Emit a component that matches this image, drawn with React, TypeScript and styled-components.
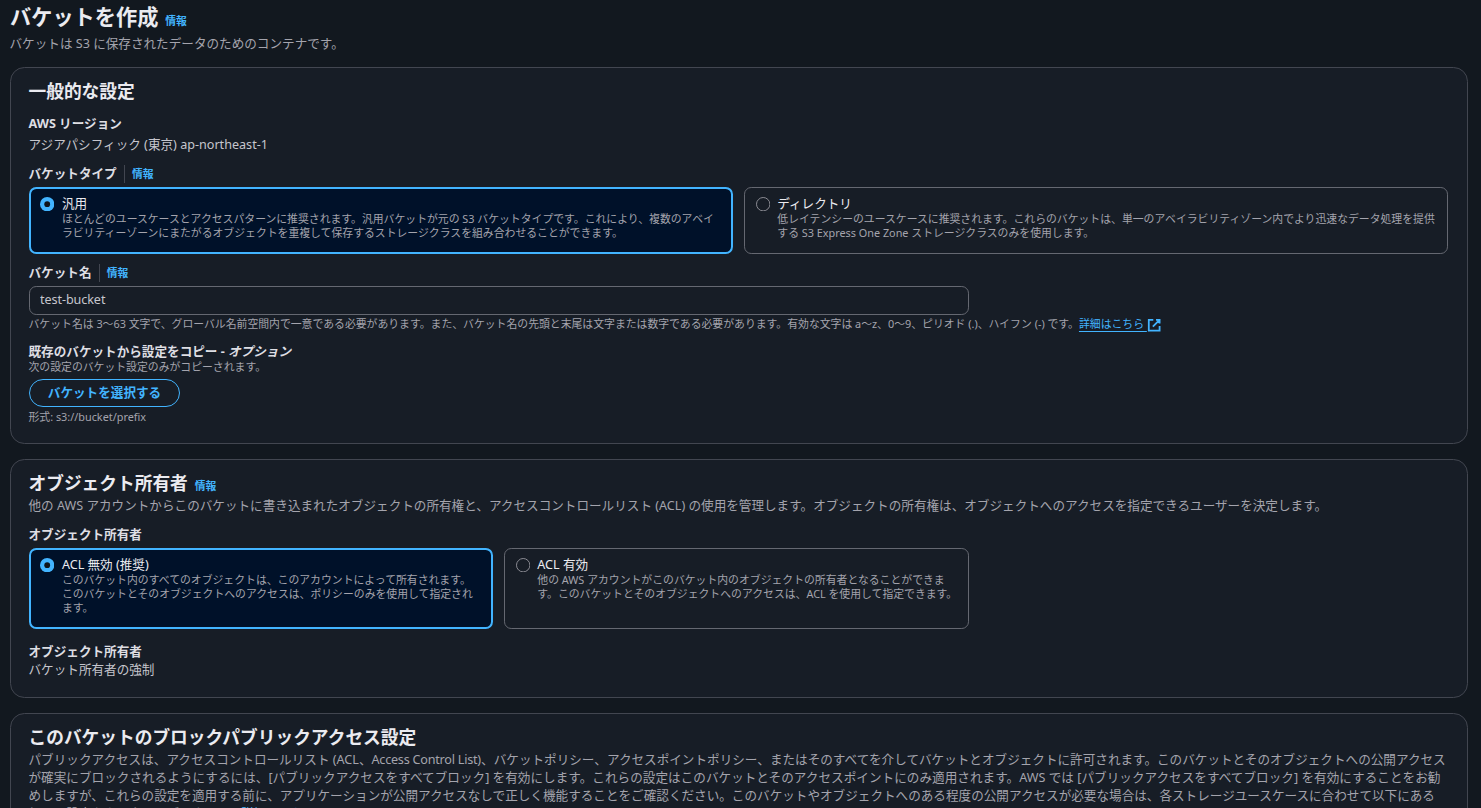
import React from "react";
import styled, { createGlobalStyle } from "styled-components";

const c = {
  page: "#12181f",
  panel: "#171d26",
  panelBorder: "#424650",
  controlBorder: "#656871",
  heading: "#ebebf0",
  label: "#dedee3",
  body: "#c6c6cd",
  secondary: "#a4a4ad",
  accent: "#42b4ff",
  selected: "#001129",
};

const GlobalStyle = createGlobalStyle`
  *, *::before, *::after { box-sizing: border-box; }
  html, body { margin: 0; padding: 0; background: ${c.page}; overflow: hidden; }
  body {
    font-family: "Noto Sans", "Noto Sans CJK JP", sans-serif;
    font-size: 12.6px;
    line-height: 18px;
    color: ${c.body};
  }
  h1, h2, p { margin: 0; }
`;

const Page = styled.main`
  height: 808px;
  overflow: hidden;
  padding: 3px 13px 0 10px;
  display: flex;
  flex-direction: column;
  white-space: nowrap;
`;

const PageHeader = styled.header`
  height: 64px;
  flex: none;
`;

const TitleRow = styled.div`
  display: flex;
  align-items: baseline;
  gap: 7px;
`;

const PageTitle = styled.h1`
  font-size: 21.2px;
  line-height: 27px;
  font-weight: 700;
  color: ${c.heading};
`;

const PanelTitle = styled.h2`
  && {
    margin-left: -0.5px;
  }
  font-size: 17.72px;
  line-height: 22px;
  font-weight: 700;
  color: ${c.heading};
`;

const InfoLink = styled.a`
  font-size: 10.8px;
  line-height: 18px;
  font-weight: 700;
  color: ${c.accent};
`;

const Description = styled.p<{ $top?: number }>`
  && {
    margin: ${(p) => p.$top ?? 0}px 0 0 -0.5px;
  }
  color: ${c.secondary};
`;

const Panel = styled.section<{ $height: number }>`
  flex: none;
  height: ${(p) => p.$height}px;
  margin-bottom: 15px;
  padding: 12px 19px 0 18px;
  background: ${c.panel};
  border: 1px solid ${c.panelBorder};
  border-radius: 14.4px;
`;

const Field = styled.div<{ $top: number }>`
  margin-top: ${(p) => p.$top}px;
`;

const Label = styled.div`
  display: flex;
  height: 18px;
  margin-left: -0.5px;
  font-weight: 700;
  color: ${c.label};
`;

const LabelInfo = styled(InfoLink)`
  margin-left: 7.3px;
  padding-left: 7px;
  border-left: 1px solid ${c.panelBorder};
`;

const Value = styled.div<{ $top?: number }>`
  margin: ${(p) => p.$top ?? 0}px 0 0 -0.5px;
`;

const Small = styled.div<{ $top?: number }>`
  margin: ${(p) => p.$top ?? 0}px 0 0 -0.5px;
  font-size: 10.85px;
  line-height: 14.4px;
  color: ${c.secondary};
`;

const Tiles = styled.div<{ $columns?: string; $top: number }>`
  display: grid;
  grid-template-columns: ${(p) => p.$columns ?? "1fr 1fr"};
  gap: 11px;
  margin-top: ${(p) => p.$top}px;
`;

const TileBox = styled.label<{ $selected?: boolean; $height: number }>`
  display: flex;
  gap: ${(p) => (p.$selected ? 8 : 7.4)}px;
  height: ${(p) => p.$height}px;
  padding: ${(p) => (p.$selected ? "5px 9px" : "6px 10px 6px 11px")};
  border: ${(p) => (p.$selected ? 2 : 1)}px solid ${(p) => (p.$selected ? c.accent : c.controlBorder)};
  border-radius: 7.2px;
  background: ${(p) => (p.$selected ? c.selected : "transparent")};
`;

const RadioMark = styled.svg`
  flex: none;
  width: 14.4px;
  height: 14.4px;
  margin-top: 3px;
`;

const TileTitle = styled.div`
  height: 16.6px;
  margin: 1px 0 0 -0.5px;
  color: ${c.heading};
`;

const TextInput = styled.input`
  display: block;
  width: 940px;
  height: 29px;
  margin-top: 4px;
  padding: 0 10px 2px;
  font: inherit;
  letter-spacing: -0.08px;
  color: ${c.body};
  background: transparent;
  border: 1px solid ${c.controlBorder};
  border-radius: 7.2px;
  outline: none;
`;

const ExternalLink = styled.a`
  color: ${c.accent};
  text-decoration: underline;
  text-underline-offset: 3px;
`;

const ExternalIcon = styled.svg`
  width: 14.4px;
  height: 14.4px;
  vertical-align: -4px;
  fill: none;
  stroke: ${c.accent};
  stroke-width: 2;
`;

const PillButton = styled.button`
  display: flex;
  align-items: center;
  justify-content: center;
  width: 151px;
  height: 28px;
  margin-top: 5px;
  padding: 0 0 1px;
  font: inherit;
  font-weight: 700;
  color: ${c.accent};
  background: transparent;
  border: 1px solid ${c.accent};
  border-radius: 18px;
`;

const Tight = styled.span`
  letter-spacing: -0.22px;
`;

const Loose = styled.span`
  letter-spacing: 0.027px;
`;

function Radio({ checked }: { checked?: boolean }) {
  return (
    <RadioMark viewBox="0 0 16 16">
      {checked ? (
        <>
          <circle cx="8" cy="8" r="8" fill={c.accent} />
          <circle cx="8" cy="8" r="3.2" fill="#0f141a" />
        </>
      ) : (
        <circle cx="8" cy="8" r="7.45" fill="none" stroke="#8c8c94" strokeWidth="1.1" />
      )}
    </RadioMark>
  );
}

function Lines({ lines }: { lines: React.ReactNode[] }) {
  return (
    <>
      {lines.map((line, i) => (
        <React.Fragment key={i}>
          {i > 0 && <br />}
          {line}
        </React.Fragment>
      ))}
    </>
  );
}

function Tile(props: { title: string; lines: string[]; height: number; selected?: boolean }) {
  return (
    <TileBox $selected={props.selected} $height={props.height}>
      <Radio checked={props.selected} />
      <div>
        <TileTitle>{props.title}</TileTitle>
        <Small>
          <Lines lines={props.lines} />
        </Small>
      </div>
    </TileBox>
  );
}

export default function App() {
  return (
    <>
      <GlobalStyle />
      <Page>
        <PageHeader>
          <TitleRow>
            <PageTitle>バケットを作成</PageTitle>
            <InfoLink>情報</InfoLink>
          </TitleRow>
          <Description $top={5}>バケットは S3 に保存されたデータのためのコンテナです。</Description>
        </PageHeader>

        <Panel $height={377}>
          <PanelTitle>一般的な設定</PanelTitle>
          <Field $top={13}>
            <Label>AWS リージョン</Label>
            <Value $top={3}>アジアパシフィック (東京) ap-northeast-1</Value>
          </Field>
          <Field $top={11}>
            <Label>
              バケットタイプ<LabelInfo>情報</LabelInfo>
            </Label>
            <Tiles $top={4}>
              <Tile
                selected
                height={67}
                title="汎用"
                lines={[
                  "ほとんどのユースケースとアクセスパターンに推奨されます。汎用バケットが元の S3 バケットタイプです。これにより、複数のアベイ",
                  "ラビリティーゾーンにまたがるオブジェクトを重複して保存するストレージクラスを組み合わせることができます。",
                ]}
              />
              <Tile
                height={67}
                title="ディレクトリ"
                lines={[
                  "低レイテンシーのユースケースに推奨されます。これらのバケットは、単一のアベイラビリティゾーン内でより迅速なデータ処理を提供",
                  "する S3 Express One Zone ストレージクラスのみを使用します。",
                ]}
              />
            </Tiles>
          </Field>
          <Field $top={10}>
            <Label>
              バケット名<LabelInfo>情報</LabelInfo>
            </Label>
            <TextInput defaultValue="test-bucket" spellCheck={false} />
            <Small $top={2}>
              バケット名は 3～63 文字で、グローバル名前空間内で一意である必要があります。また、バケット名の先頭と末尾は文字または数字である必要があります。有効な文字は
              a～z、0～9、ピリオド (.)、ハイフン (-) です。
              <ExternalLink>
                詳細はこちら{" "}
                <ExternalIcon viewBox="0 0 16 16">
                  <path d="M10 2h4v4M6.5 9.5 14 2M14 9v5H2V2h5" />
                </ExternalIcon>
              </ExternalLink>
            </Small>
          </Field>
          <Field $top={11}>
            <Label>
              <span>
                既存のバケットから設定をコピー - <i>オプション</i>
              </span>
            </Label>
            <Small $top={-1}>次の設定のバケット設定のみがコピーされます。</Small>
            <PillButton>バケットを選択する</PillButton>
            <Small $top={3}>形式: s3://bucket/prefix</Small>
          </Field>
        </Panel>

        <Panel $height={239}>
          <TitleRow>
            <PanelTitle>オブジェクト所有者</PanelTitle>
            <InfoLink>情報</InfoLink>
          </TitleRow>
          <Description $top={2}>
            他の AWS アカウントからこのバケットに書き込まれたオブジェクトの所有権と、アクセスコントロールリスト (ACL)
            の使用を管理します。オブジェクトの所有権は、オブジェクトへのアクセスを指定できるユーザーを決定します。
          </Description>
          <Field $top={11}>
            <Label>オブジェクト所有者</Label>
            <Tiles $top={4} $columns="464px 465px">
              <Tile
                selected
                height={81}
                title="ACL 無効 (推奨)"
                lines={[
                  "このバケット内のすべてのオブジェクトは、このアカウントによって所有されます。",
                  "このバケットとそのオブジェクトへのアクセスは、ポリシーのみを使用して指定され",
                  "ます。",
                ]}
              />
              <Tile
                height={81}
                title="ACL 有効"
                lines={[
                  "他の AWS アカウントがこのバケット内のオブジェクトの所有者となることができま",
                  "す。このバケットとそのオブジェクトへのアクセスは、ACL を使用して指定できます。",
                ]}
              />
            </Tiles>
          </Field>
          <Field $top={14}>
            <Label>オブジェクト所有者</Label>
            <Value>バケット所有者の強制</Value>
          </Field>
        </Panel>

        <Panel $height={400}>
          <PanelTitle>このバケットのブロックパブリックアクセス設定</PanelTitle>
          <Description $top={3}>
            <Lines
              lines={[
                <>
                  パブリックアクセスは、アクセスコントロールリスト (ACL、<Tight>Access Control List</Tight>
                  )、バケットポリシー、アクセスポイントポリシー、またはそのすべてを介してバケットとオブジェクトに許可されます。このバケットとそのオブジェクトへの公開アクセス
                </>,
                <Loose>
                  が確実にブロックされるようにするには、[パブリックアクセスをすべてブロック] を有効にします。これらの設定はこのバケットとそのアクセスポイントにのみ適用されます。AWS では [パブリックアクセスをすべてブロック] を有効にすることをお勧
                </Loose>,
                "めしますが、これらの設定を適用する前に、アプリケーションが公開アクセスなしで正しく機能することをご確認ください。このバケットやオブジェクトへのある程度の公開アクセスが必要な場合は、各ストレージユースケースに合わせて以下にある",
                "個々の設定をカスタマイズできます。",
              ]}
            />
            <ExternalLink>詳細はこちら</ExternalLink>
          </Description>
        </Panel>
      </Page>
    </>
  );
}
